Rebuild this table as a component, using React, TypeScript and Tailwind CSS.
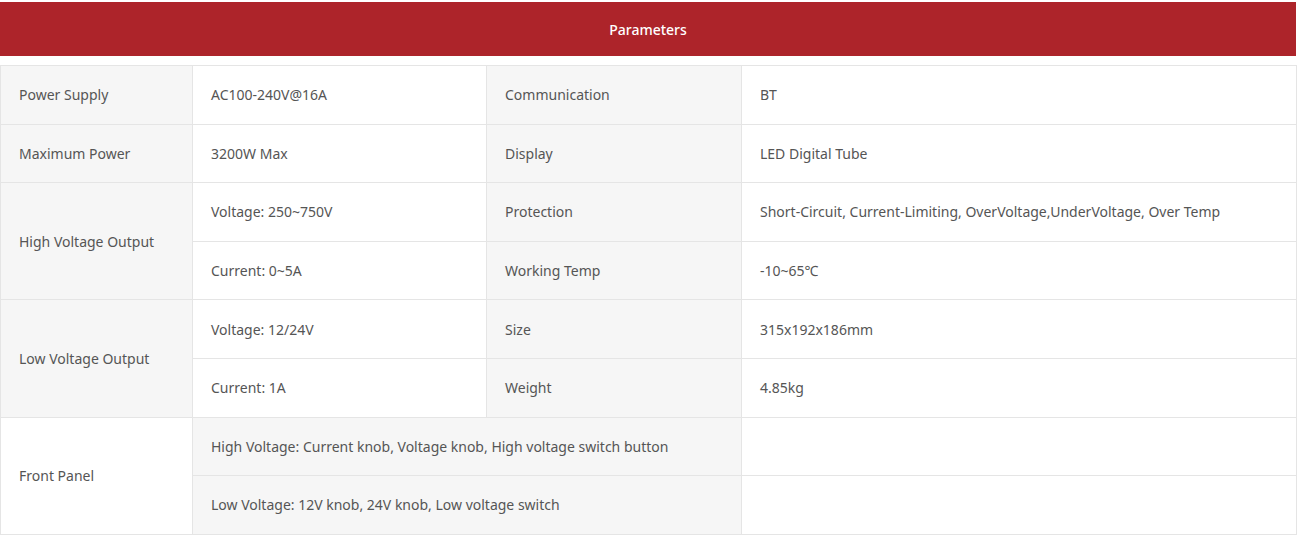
import React from "react";

const font = { fontFamily: '"Noto Sans", "Open Sans", Arial, sans-serif' };

const G = "bg-[#f6f6f6]";
const W = "bg-white";
const td = "border border-[#e5e5e5] px-[18px] align-middle text-[14px] text-[#555555]";

export default function App() {
  return (
    <div className="w-[1302px] h-[538px] bg-white pt-[2px]" style={font}>
      <div className="w-[1296px] h-[54px] bg-[#ad242a] flex items-center justify-center text-white text-[14px] font-medium">
        Parameters
      </div>
      <div className="mt-[9px] w-[1296px]">
        <table className="w-[1296px] table-fixed border-collapse">
          <colgroup>
            <col className="w-[192px]" />
            <col className="w-[294px]" />
            <col className="w-[255px]" />
            <col className="w-[555px]" />
          </colgroup>
          <tbody>
            <tr className="h-[58.6px]">
              <td className={`${td} ${G}`}>Power Supply</td>
              <td className={`${td} ${W}`}>AC100-240V@16A</td>
              <td className={`${td} ${G}`}>Communication</td>
              <td className={`${td} ${W}`}>BT</td>
            </tr>
            <tr className="h-[58.6px]">
              <td className={`${td} ${G}`}>Maximum Power</td>
              <td className={`${td} ${W}`}>3200W Max</td>
              <td className={`${td} ${G}`}>Display</td>
              <td className={`${td} ${W}`}>LED Digital Tube</td>
            </tr>
            <tr className="h-[58.6px]">
              <td rowSpan={2} className={`${td} ${G}`}>High Voltage Output</td>
              <td className={`${td} ${W}`}>Voltage: 250~750V</td>
              <td className={`${td} ${G}`}>Protection</td>
              <td className={`${td} ${W}`}>Short-Circuit, Current-Limiting, OverVoltage,UnderVoltage, Over Temp</td>
            </tr>
            <tr className="h-[58.6px]">
              <td className={`${td} ${W}`}>Current: 0~5A</td>
              <td className={`${td} ${G}`}>Working Temp</td>
              <td className={`${td} ${W}`}>-10~65℃</td>
            </tr>
            <tr className="h-[58.6px]">
              <td rowSpan={2} className={`${td} ${G}`}>Low Voltage Output</td>
              <td className={`${td} ${W}`}>Voltage: 12/24V</td>
              <td className={`${td} ${G}`}>Size</td>
              <td className={`${td} ${W}`}>315x192x186mm</td>
            </tr>
            <tr className="h-[58.6px]">
              <td className={`${td} ${W}`}>Current: 1A</td>
              <td className={`${td} ${G}`}>Weight</td>
              <td className={`${td} ${W}`}>4.85kg</td>
            </tr>
            <tr className="h-[58.6px]">
              <td rowSpan={2} className={`${td} ${W}`}>Front Panel</td>
              <td colSpan={2} className={`${td} ${G}`}>High Voltage: Current knob, Voltage knob, High voltage switch button</td>
              <td className={`${td} ${W}`}></td>
            </tr>
            <tr className="h-[58.6px]">
              <td colSpan={2} className={`${td} ${G}`}>Low Voltage: 12V knob, 24V knob, Low voltage switch</td>
              <td className={`${td} ${W}`}></td>
            </tr>
          </tbody>
        </table>
      </div>
    </div>
  );
}
